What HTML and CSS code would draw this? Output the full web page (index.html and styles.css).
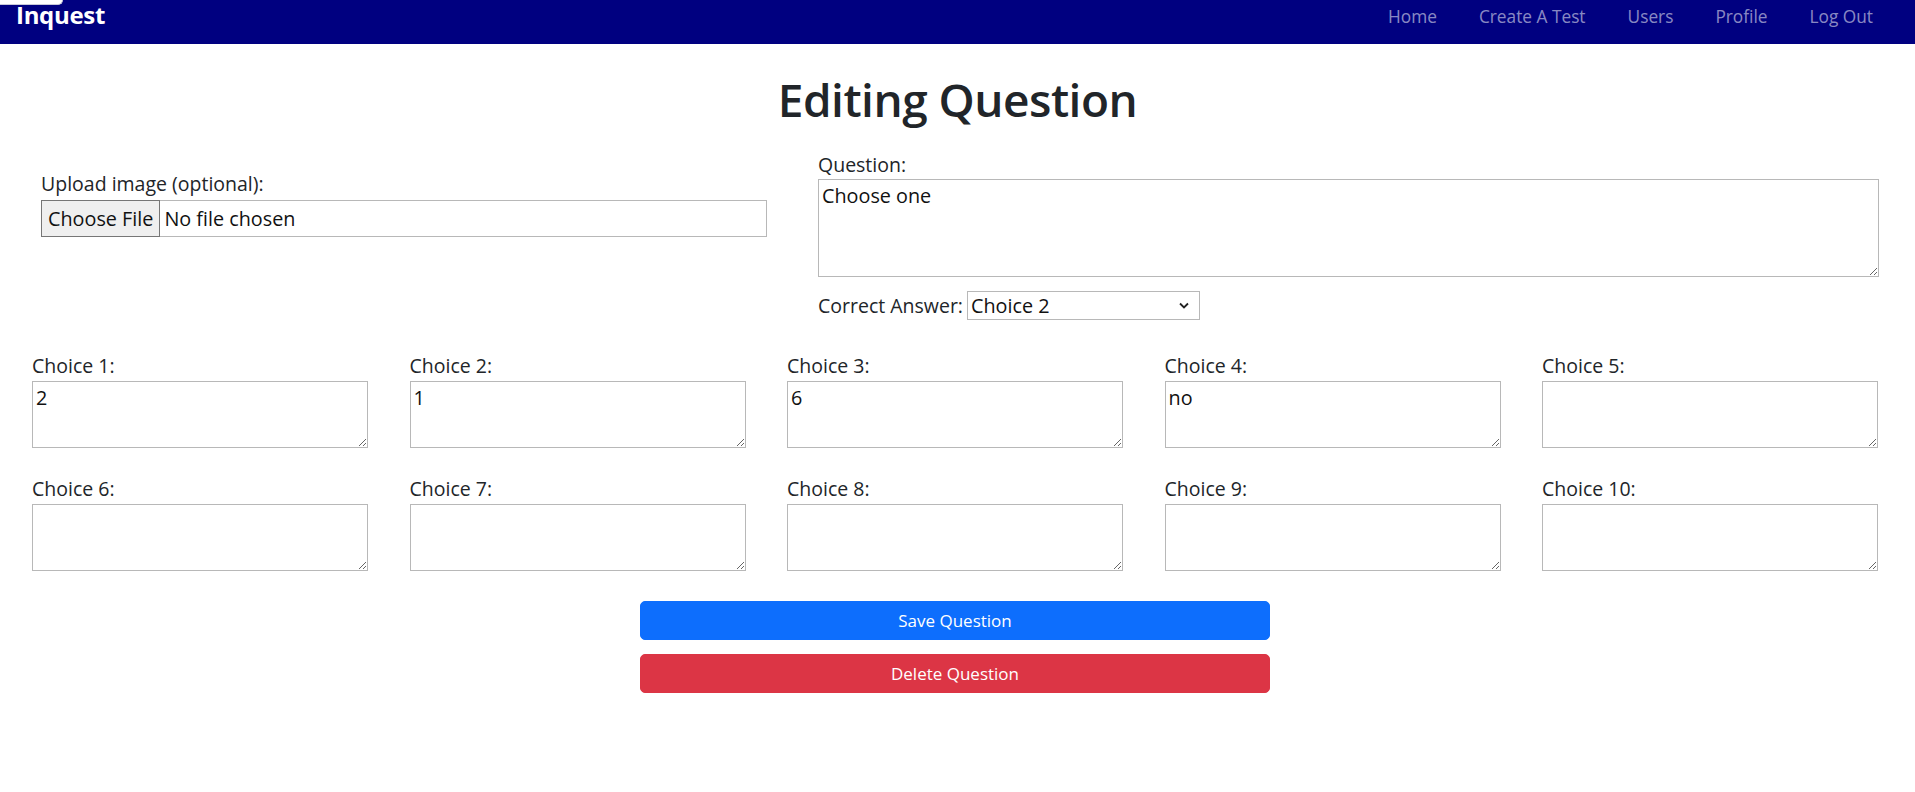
FILE: index.html
```html
<!DOCTYPE html>
<html lang="en">
<head>
<meta charset="utf-8">
<title>Editing Question</title>
<link rel="stylesheet" href="styles.css">
</head>
<body>
<nav class="navbar">
  <span class="skip-tab"></span>
  <a class="brand" href="#">Inquest</a>
  <ul class="nav-links">
    <li><a href="#">Home</a></li>
    <li><a href="#">Create A Test</a></li>
    <li><a href="#">Users</a></li>
    <li><a href="#">Profile</a></li>
    <li><a href="#">Log Out</a></li>
  </ul>
</nav>
<main class="page">
  <h1 class="title">Editing Question</h1>
  <form class="editor">
    <div class="top-section">
      <div class="upload">
        <label class="field-label" for="img">Upload image (optional):</label>
        <div class="file-input">
          <span class="file-btn">Choose File</span>
          <span class="file-name">No file chosen</span>
        </div>
      </div>
      <div class="question">
        <label class="field-label q-label" for="q">Question:</label>
        <textarea id="q" class="question-box">Choose one</textarea>
        <div class="answer-row">
          <label for="ans">Correct Answer:</label>
          <span class="select-wrap">
            <select id="ans" class="answer-select">
              <option>Choice 1</option>
              <option selected>Choice 2</option>
              <option>Choice 3</option>
              <option>Choice 4</option>
            </select>
            <svg class="chevron" width="10" height="7" viewBox="0 0 10 7"><path d="M1 1.5 L5 5.5 L9 1.5" fill="none" stroke="#222" stroke-width="1.8"/></svg>
          </span>
        </div>
      </div>
    </div>
    <div class="choices">
      <div class="choice"><label class="field-label">Choice 1:</label><textarea class="choice-box">2</textarea></div>
      <div class="choice"><label class="field-label">Choice 2:</label><textarea class="choice-box">1</textarea></div>
      <div class="choice"><label class="field-label">Choice 3:</label><textarea class="choice-box">6</textarea></div>
      <div class="choice"><label class="field-label">Choice 4:</label><textarea class="choice-box">no</textarea></div>
      <div class="choice"><label class="field-label">Choice 5:</label><textarea class="choice-box"></textarea></div>
      <div class="choice"><label class="field-label">Choice 6:</label><textarea class="choice-box"></textarea></div>
      <div class="choice"><label class="field-label">Choice 7:</label><textarea class="choice-box"></textarea></div>
      <div class="choice"><label class="field-label">Choice 8:</label><textarea class="choice-box"></textarea></div>
      <div class="choice"><label class="field-label">Choice 9:</label><textarea class="choice-box"></textarea></div>
      <div class="choice"><label class="field-label">Choice 10:</label><textarea class="choice-box"></textarea></div>
    </div>
    <div class="actions">
      <button type="button" class="btn btn-save">Save Question</button>
      <button type="button" class="btn btn-delete">Delete Question</button>
    </div>
  </form>
</main>
</body>
</html>
```

FILE: styles.css
```css
* { box-sizing: border-box; }

body {
  margin: 0;
  font-family: "Open Sans", "Noto Sans", sans-serif;
  font-size: 19.5px;
  color: #212529;
  background: #fff;
}

.navbar {
  position: relative;
  height: 44px;
  background: #000080;
  display: flex;
  justify-content: space-between;
  align-items: flex-start;
  padding: 0 21px 0 16px;
}

.skip-tab {
  position: absolute;
  left: 0;
  top: 0;
  width: 63px;
  height: 5px;
  background: #fff;
  border-bottom-right-radius: 6px;
  border-right: 1px solid #c8c8d8;
  border-bottom: 1px solid #c8c8d8;
}

.brand {
  color: #fff;
  font-weight: 700;
  font-size: 24px;
  line-height: 30px;
  text-decoration: none;
  letter-spacing: -0.3px;
}

.nav-links {
  list-style: none;
  margin: 0;
  padding: 2px 0 0;
  display: flex;
}

.nav-links a {
  display: block;
  padding: 0 21px;
  line-height: 30px;
  font-size: 17.3px;
  color: rgba(255, 255, 255, 0.55);
  text-decoration: none;
}

.title {
  margin: 25px 0 0;
  text-align: center;
  font-size: 46px;
  font-weight: 600;
  line-height: 60px;
  letter-spacing: -0.5px;
}

.editor {
  margin-top: 21px;
}

.top-section {
  display: grid;
  grid-template-columns: 726px 1061px;
  column-gap: 51px;
  padding-left: 41px;
  align-items: start;
}

.field-label {
  display: block;
  font-size: 19.5px;
  line-height: 30px;
}

.upload {
  margin-top: 19px;
}

.file-input {
  display: flex;
  align-items: stretch;
  height: 37px;
  margin-top: 1px;
  border: 1px solid #b8b8b8;
  font-size: 19.8px;
}

.file-btn {
  display: flex;
  align-items: center;
  padding: 0 6px;
  background: #efefef;
  border: 1px solid #767676;
  margin: -1px 0 -1px -1px;
  color: #111;
}

.file-name {
  display: flex;
  align-items: center;
  padding-left: 4px;
  color: #111;
}

.q-label { line-height: 29px; }

.question-box {
  display: block;
  width: 1061px;
  height: 98px;
  border: 1px solid #b8b8b8;
  padding: 2px 3px;
  font-family: inherit;
  font-size: 19.8px;
  color: #111;
}

.answer-row {
  display: flex;
  align-items: center;
  gap: 4px;
  margin-top: 14px;
  height: 29px;
  font-size: 19.5px;
}

.select-wrap {
  position: relative;
  display: inline-block;
}

.answer-select {
  appearance: none;
  -webkit-appearance: none;
  display: block;
  width: 233px;
  height: 29px;
  border: 1px solid #b8b8b8;
  border-radius: 0;
  background: #fff;
  font-family: inherit;
  font-size: 19.8px;
  color: #111;
  padding: 0 20px 0 3px;
}

.chevron {
  position: absolute;
  right: 11px;
  top: 11px;
  pointer-events: none;
}

.choices {
  display: grid;
  grid-template-columns: repeat(5, 336px);
  column-gap: 41.5px;
  row-gap: 25px;
  padding-left: 32px;
  margin-top: 30px;
}

.choice .field-label { line-height: 31px; }

.choice-box {
  display: block;
  width: 336px;
  height: 67px;
  border: 1px solid #b8b8b8;
  padding: 2px 3px;
  font-family: inherit;
  font-size: 19.8px;
  color: #111;
}

.actions {
  display: flex;
  flex-direction: column;
  align-items: center;
  gap: 14px;
  margin-top: 29.5px;
  padding-right: 5px;
}

.btn {
  width: 630px;
  height: 39px;
  border: 1px solid transparent;
  border-radius: 5px;
  color: #fff;
  font-family: inherit;
  font-size: 17px;
  cursor: pointer;
}

.btn-save { background: #0d6efd; border-color: #0d6efd; }
.btn-delete { background: #dc3545; border-color: #dc3545; }
```
